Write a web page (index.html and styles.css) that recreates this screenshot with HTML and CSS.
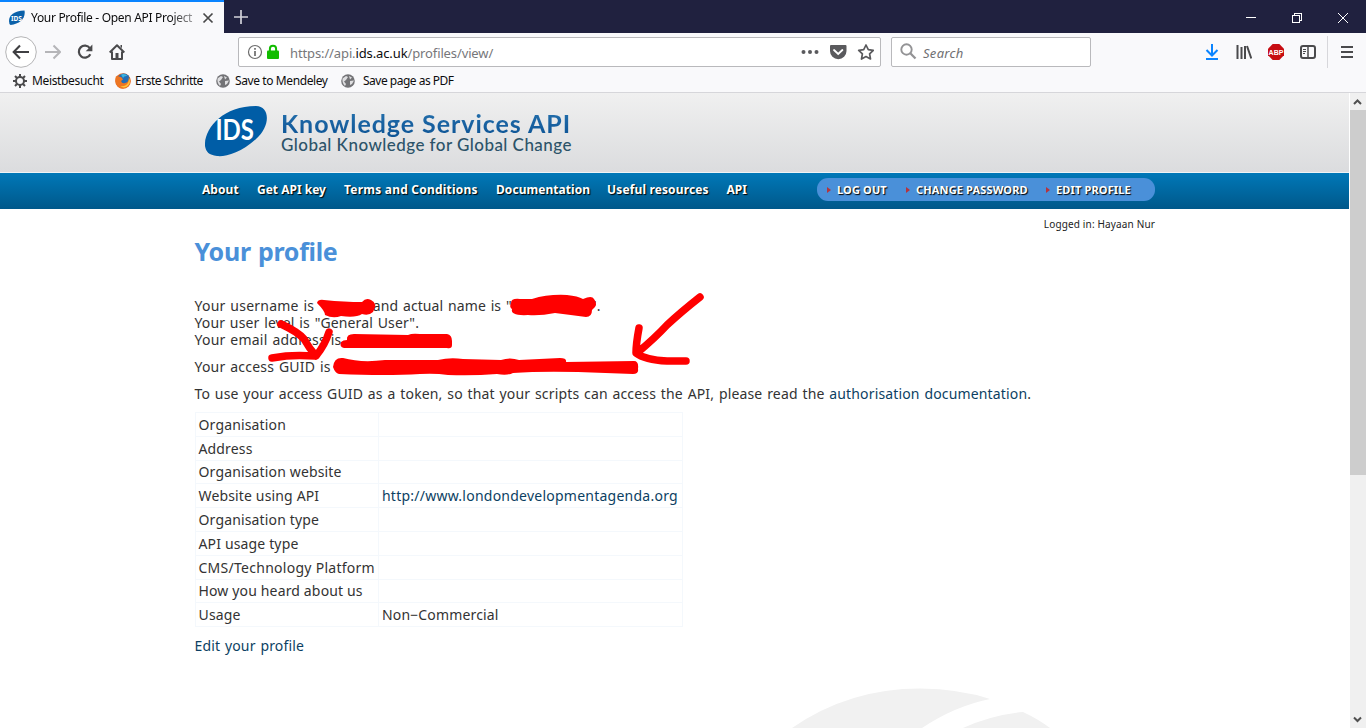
FILE: index.html
```html
<!DOCTYPE html>
<html lang="en">
<head>
<meta charset="utf-8">
<title>Your Profile - Open API Project</title>
<link rel="stylesheet" href="styles.css">
</head>
<body>
<div class="window">
  <div class="tabbar">
    <div class="tab">
      <svg class="favicon" width="16" height="16" viewBox="0 0 16 16"><path d="M0 11C0 5 5 1 15.500 .5C17 8 11 14 1.500 15Q0 14 0 11Z" fill="#0b61a9"/><text x="2" y="11" class="fav-text">IDS</text></svg>
      <span class="tab-title">Your Profile - Open API Project</span>
      <svg class="tab-close" width="12" height="12" viewBox="0 0 12 12"><path d="M1.500 1.500L10.500 10.500M10.500 1.500L1.500 10.500" stroke="#484848" stroke-width="1.700"/></svg>
    </div>
    <svg class="tab-new" width="14" height="14" viewBox="0 0 14 14"><path d="M7 0V14M0 7H14" stroke="#d2d2da" stroke-width="1.700"/></svg>
    <svg class="win-controls" width="108" height="16" viewBox="0 0 108 16" fill="none" stroke="#fff" shape-rendering="crispEdges"><path d="M3 8.500H13M49.500 6.500H56.500V13.500H49.500ZM51.500 6.500V4.500H58.500V11.500H56.500"/><path d="M95 4L105 14M105 4L95 14" shape-rendering="auto"/></svg>
  </div>

  <div class="toolbar">
    <div class="nav-buttons">
      <svg width="32" height="32" viewBox="0 0 32 32" fill="none"><circle cx="16" cy="16" r="15.300" fill="#fff" stroke="#b4b4b6"/><path d="M24 16H9M15 9.500L8.700 16L15 22.500" stroke="#3f3f42" stroke-width="2.100"/></svg>
      <svg width="16" height="16" viewBox="0 0 16 16" fill="none"><path d="M0 8H14.500M8.500 1.500L15 8L8.500 14.500" stroke="#b5b5b8" stroke-width="2"/></svg>
      <svg width="16" height="16" viewBox="0 0 16 16" fill="none"><path d="M13.300 10.200A6 6 0 1 1 12.800 4.200" stroke="#4a4a4c" stroke-width="2.200"/><path d="M15.400 .5V7.200H8.700Z" fill="#4a4a4c"/></svg>
      <svg width="16" height="16" viewBox="0 0 16 16" fill="none"><path d="M.7 8.500L8 1.300L15.300 8.500M3 7.500V15H13V7.500" stroke="#4a4a4c" stroke-width="2" stroke-linejoin="round"/><path d="M6.500 9H9.500V15H6.500Z" fill="#4a4a4c"/><path d="M11.500 1H13V4L11.500 3Z" fill="#4a4a4c"/></svg>
    </div>
    <div class="urlbar">
      <svg width="16" height="16" viewBox="0 0 16 16" fill="none"><circle cx="8" cy="8" r="6.500" stroke="#6c6c6c" stroke-width="1.200"/><path d="M8 7V12M8 4V5.800" stroke="#6c6c6c" stroke-width="1.700"/></svg>
      <svg width="14" height="16" viewBox="0 0 14 16"><path d="M3.900 7V4.800A3.100 3.100 0 0 1 10.100 4.800V7" fill="none" stroke="#12bc00" stroke-width="2"/><rect x="1" y="6.500" width="12" height="8.500" rx="1" fill="#12bc00"/></svg>
      <span class="url">https://api.<b>ids.ac.uk</b>/profiles/view/</span>
      <svg class="url-icons" width="74" height="18" viewBox="0 0 74 18"><g fill="#5a5a5d"><circle cx="3.500" cy="9" r="2"/><circle cx="10" cy="9" r="2"/><circle cx="16.500" cy="9" r="2"/><path d="M30.500 2H45.500Q46.500 2 46.500 3V8A8 8 0 0 1 30 8V3Q30 2 31 2Z"/></g><path d="M34 7L38.200 11L42.400 7" fill="none" stroke="#fff" stroke-width="1.800" stroke-linecap="round"/><path d="M66 2L68.300 6.700L73.300 7.300L69.600 10.900L70.500 16L66 13.600L61.500 16L62.400 10.900L58.700 7.300L63.700 6.700Z" fill="none" stroke="#5a5a5d" stroke-width="1.700" stroke-linejoin="round"/></svg>
    </div>
    <div class="searchbar">
      <svg width="17" height="17" viewBox="0 0 17 17" fill="none" stroke="#939395"><circle cx="6.500" cy="6.500" r="5.200" stroke-width="1.900"/><path d="M10.300 10.300L15.500 15.500" stroke-width="2.300"/></svg>
      <span>Search</span>
    </div>
    <div class="tools">
      <svg width="14" height="16" viewBox="0 0 14 16" fill="none" stroke="#0a84ff" stroke-width="2"><path d="M7 0V11M1.500 6L7 11.500L12.500 6M1 15H13"/></svg>
      <svg width="16" height="16" viewBox="0 0 16 16" stroke="#4a4a4c" fill="none" stroke-width="2"><path d="M1.500 1V15M5.500 3V15M9 2V15M11 2L15.300 14.500"/></svg>
      <svg width="16" height="16" viewBox="0 0 16 16"><path d="M4.700 0H11.300L16 4.700V11.300L11.300 16H4.700L0 11.300V4.700Z" fill="#c70d12"/><text x="8" y="10.900" class="abp">ABP</text></svg>
      <svg width="16" height="16" viewBox="0 0 16 16" fill="none" stroke="#4a4a4c"><rect x="1" y="2" width="14" height="12" rx="2" stroke-width="2"/><path d="M8 2V14" stroke-width="1.500"/><path d="M3 5.500H6M3 7.500H6M3 9.500H5"/></svg>
      <span class="divider"></span>
      <svg width="12" height="12" viewBox="0 0 12 12" stroke="#4a4a4c" stroke-width="2"><path d="M0 1H12M0 6H12M0 11H12"/></svg>
    </div>
  </div>

  <div class="bookmarks">
    <div class="bookmark b1"><svg width="14" height="14" viewBox="0 0 14 14" fill="none" stroke="#4b4b4d"><circle cx="7" cy="7" r="4" stroke-width="2"/><path d="M7 0V3M7 11V14M0 7H3M11 7H14M2 2L4 4M10 10L12 12M12 2L10 4M2 12L4 10" stroke-width="2"/></svg><span>Meistbesucht</span></div>
    <div class="bookmark b2"><svg width="16" height="16" viewBox="0 0 16 16"><circle cx="8" cy="8" r="7.800" fill="#e6691f"/><circle cx="8.800" cy="6.500" r="6" fill="#226db6"/><path d="M6 1.500Q10 0 12.500 3Q9 2.500 8 5Z" fill="#39b4e0"/><path d="M1 3Q3 4 4.500 3.500Q7 4 8 6.500L6 8Q7 11 10 10Q14 9.500 14 4Q17 9 13.500 13Q9 17 4 14.500Q-1 10 1 3Z" fill="#ed7623"/><path d="M13.500 4.500Q17 10 12 13.500Q8 15.500 5 13Q10 14 13 10Q14.500 7 13.500 4.500Z" fill="#ffc63a"/></svg><span>Erste Schritte</span></div>
    <div class="bookmark b3"><svg width="14" height="14" viewBox="0 0 14 14"><circle cx="7" cy="7" r="6.800" fill="#737376"/><path d="M1.500 4.500L5 2L7 3L5 6L3 7.500L5 10L4 12Q1 9 1.500 4.500ZM8 2L11 3.500L9 5.500ZM9 7L13 6.500L11 10L9 11Z" fill="#dedee0"/></svg><span>Save to Mendeley</span></div>
    <div class="bookmark b4"><svg width="14" height="14" viewBox="0 0 14 14"><circle cx="7" cy="7" r="6.800" fill="#737376"/><path d="M1.500 4.500L5 2L7 3L5 6L3 7.500L5 10L4 12Q1 9 1.500 4.500ZM8 2L11 3.500L9 5.500ZM9 7L13 6.500L11 10L9 11Z" fill="#dedee0"/></svg><span>Save page as PDF</span></div>
  </div>

  <div class="viewport">
    <div class="page">
      <header class="masthead">
        <svg class="logo" width="62" height="52" viewBox="0 0 62 52"><path d="M0 40C-1 23 17 0 51 0C65 0 66 20 51 33C36 47 20 51 12 50C4 49 1 46 0 40Z" fill="#005da6"/><text x="10.500" y="33.500" class="logo-text" textLength="38.500" lengthAdjust="spacingAndGlyphs">IDS</text></svg>
        <div class="brand"><div class="brand-name">Knowledge Services API</div><div class="brand-tag">Global Knowledge for Global Change</div></div>
      </header>
      <nav class="mainnav">
        <div class="links"><a class="n1">About</a><a class="n2">Get API key</a><a class="n3">Terms and Conditions</a><a class="n4">Documentation</a><a class="n5">Useful resources</a><a class="n6">API</a></div>
        <div class="account"><a class="a1">LOG OUT</a><a class="a2">CHANGE PASSWORD</a><a class="a3">EDIT PROFILE</a></div>
      </nav>
      <main class="content">
        <div class="logged">Logged in: Hayaan Nur</div>
        <h1>Your profile</h1>
        <p class="info">Your username is<i class="gap g1"></i><span class="name">and actual name is "</span><i class="gap g2"></i>".<br><span class="level">Your user level is "General User".</span><br>Your email address is</p>
        <p class="guid">Your access GUID is</p>
        <p class="token">To use your access GUID as a token, so that your scripts can access the API, please read the <a>authorisation documentation</a>.</p>
        <table>
          <tr><td>Organisation</td><td></td></tr>
          <tr><td>Address</td><td></td></tr>
          <tr><td>Organisation website</td><td></td></tr>
          <tr><td>Website using API</td><td><a class="site">http://www.londondevelopmentagenda.org</a></td></tr>
          <tr><td>Organisation type</td><td></td></tr>
          <tr><td>API usage type</td><td></td></tr>
          <tr><td class="wide">CMS/Technology Platform</td><td></td></tr>
          <tr><td>How you heard about us</td><td></td></tr>
          <tr><td>Usage</td><td>Non−Commercial</td></tr>
        </table>
        <a class="edit">Edit your profile</a>
      </main>
      <svg class="watermark" width="300" height="40" viewBox="780 688 300 40"><path d="M792 728Q849 688.500 920 688.500Q960 689 990 699Q955 706 922 728ZM963 728Q992 715 1023 712Q1038 719 1050 728Z" fill="#f1f1f1"/></svg>
    </div>
    <div class="scrollbar">
      <svg width="16" height="17" viewBox="0 0 16 17"><path d="M4 11L7.500 7.500L11 11" fill="none" stroke="#505050" stroke-width="2"/></svg>
      <div class="thumb"></div>
      <svg width="16" height="17" viewBox="0 0 16 17"><path d="M4 6.500L7.500 10L11 6.500" fill="none" stroke="#505050" stroke-width="2"/></svg>
    </div>
  </div>
  <!-- Hand-drawn redactions and arrows over the page -->
  <svg class="marks" width="1366" height="728" viewBox="0 0 1366 728">
    <g fill="#f00"><path d="M317 303Q318 299 324 300Q345 302 362 302Q366 297 371 300Q378 303 373 312Q369 316 362 314Q356 318 341 316Q333 319 325 315Q325 311 317 303Z"/>
    <path d="M511 303Q511 298 520 299L532 299Q548 294 567 295Q578 296 583 299Q592 295 594 299Q599 305 592 310Q592 317 586 317Q571 315 555 313Q540 316 528 315Q510 316 512 309Q509 307 511 303Z"/>
    <path d="M341 342Q343 340 347 340Q346 334 354 334L408 335Q412 333 420 334L447 334Q452 335 452 341L452 345Q452 349 447 348L392 348L344 348Q339 347 341 342Z"/>
    <path d="M333 367Q334 357 343 358Q361 363 385 360L438 360Q450 357 463 359L501 360Q510 357 519 360L560 358Q567 358 566 362L634 361Q639 361 638 369Q639 374 633 374L578 372Q540 371 513 373Q507 376 497 374Q473 376 448 375Q435 373 420 374Q386 376 339 374Q335 373 333 367Z"/></g>
    <g fill="none" stroke="#f00" stroke-width="7.500" stroke-linecap="round" stroke-linejoin="round"><path d="M281 324Q298 332 304 339Q309 348 316 356M329 332Q325 345 316 356Q298 355 286 356L272 358"/><path d="M700 297Q681 312 667 325Q655 338 637 353M639 328Q636 344 636 353Q645 360 667 361L686 361"/></g>
  </svg>
</div>
</body>
</html>
```
FILE: styles.css
```css
* { box-sizing: border-box; }
body { margin: 0; }
svg { display: block; flex: none; }
.window { position: relative; width: 1366px; height: 728px; overflow: hidden; display: flex; flex-direction: column; font-family: "Noto Sans", sans-serif; background: #f9f9fb; }
.window span, .window a { white-space: nowrap; }

.tabbar { height: 33px; flex: none; background: #20213f; display: flex; align-items: center; }
.tab { width: 224px; height: 33px; background: #f9f9fb; border-top: 2px solid #0a84ff; display: flex; align-items: center; padding-left: 9px; }
.fav-text { font: bold 6.500px "Noto Sans", sans-serif; fill: #fff; }
.tab-title { font-size: 12px; letter-spacing: -0.31px; color: #0c0c0d; width: 163px; margin: 0 8px 0 6px; -webkit-mask-image: linear-gradient(90deg, #000 138px, #0006 162px); mask-image: linear-gradient(90deg, #000 138px, #0006 162px); }
.tab-new { margin-left: 10px; }
.win-controls { margin-left: auto; margin-right: 15px; }

.toolbar { height: 37px; flex: none; display: flex; align-items: center; }
.nav-buttons { width: 238px; padding-left: 5px; display: flex; align-items: center; gap: 16px; }
.nav-buttons svg:nth-child(2) { margin-left: -8px; }
.urlbar { width: 643px; height: 30px; border: 1px solid #b9b9bc; border-radius: 2px; background: #fff; display: flex; align-items: center; padding: 0 6px 0 8px; }
.urlbar svg:nth-child(2) { margin-left: 3px; }
.url { color: #77777a; font-size: 13px; margin-left: 10px; letter-spacing: -0.12px; padding-top: 2px; }
.url b { font-weight: normal; color: #0c0c0d; }
.url-icons { margin-left: auto; }
.searchbar { width: 200px; height: 30px; margin-left: 10px; border: 1px solid #b9b9bc; border-radius: 2px; background: #fff; display: flex; align-items: center; gap: 6px; padding-left: 8px; font-size: 13px; font-style: italic; color: #707073; letter-spacing: 0.3px; }
.searchbar span { padding-top: 2px; }
.tools { display: flex; align-items: center; margin-left: auto; padding-right: 13px; gap: 16px; }
.tools svg:first-child { margin-right: 1px; }
.divider { width: 1px; height: 32px; background: #d7d7db; margin: 0 -3px 0 -5px; }
.abp { font: bold 7px "Liberation Sans", sans-serif; fill: #fff; text-anchor: middle; }

.bookmarks { height: 23px; flex: none; border-bottom: 1px solid #d6d6da; display: flex; align-items: center; padding: 0 0 1px 13px; font-size: 12px; color: #0c0c0d; letter-spacing: -0.4px; }
.bookmark { display: flex; align-items: center; height: 20px; gap: 5px; }
.b1 { width: 101px; letter-spacing: -0.35px; }
.b2 { width: 102px; padding-left: 1px; gap: 4px; letter-spacing: -0.5px; }
.b3 { width: 125px; }
.b4 { gap: 8px; letter-spacing: -0.5px; }

.viewport { flex: 1; display: flex; min-height: 0; }
.page { width: 1349px; position: relative; background: #fff; overflow: hidden; color: #333; }
.scrollbar { width: 17px; background: #f0f0f0; border-left: 1px solid #fff; display: flex; flex-direction: column; }
.thumb { height: 365px; background: #cdcdcd; margin-bottom: auto; }

.masthead { height: 80px; background: linear-gradient(#f0f0f0, #dbdcde); border-bottom: 1px solid #eef3f6; display: flex; padding: 13px 0 0 205px; }
.logo-text { font: bold 29px Lato, sans-serif; fill: #fff; }
.brand { margin-left: 14px; white-space: nowrap; font-family: Lato, sans-serif; }
.brand-name { font-size: 25px; line-height: 29px; font-weight: bold; letter-spacing: 0.95px; margin-top: 3px; background: linear-gradient(#2672ae, #0c5294); -webkit-background-clip: text; background-clip: text; -webkit-text-fill-color: transparent; }
.brand-tag { font-size: 17px; line-height: 15px; margin-top: -1px; font-weight: 500; color: #2c5369; letter-spacing: 0.45px; }

.mainnav { height: 36px; background: linear-gradient(#0078b8, #00588a); display: flex; align-items: center; padding-bottom: 3px; color: #fff; font-weight: bold; font-size: 12px; text-shadow: 1px 1px 1px #000; }
.links { display: flex; width: 615px; margin-left: 202px; letter-spacing: 0.05px; }
.n1 { width: 55px; } .n2 { width: 87px; letter-spacing: 0; } .n3 { width: 152px; letter-spacing: 0.22px; } .n4 { width: 111px; } .n5 { width: 119.500px; letter-spacing: 0.14px; }
.account { width: 338px; height: 23px; border-radius: 11px; background: #4a90d9; display: flex; align-items: center; font-size: 11px; padding-left: 10px; letter-spacing: 0.15px; }
.account a { display: flex; align-items: center; gap: 6px; }
.account a::before { content: ""; border: 3px solid transparent; border-left: 4px solid #b5343d; border-right: 0; }
.a1 { width: 79px; } .a2 { width: 140px; }

.content { width: 960.500px; margin-left: 194.500px; font-size: 14px; line-height: 17px; letter-spacing: 0.15px; word-spacing: 1px; }
.logged { text-align: right; font-size: 10px; line-height: 14px; padding-top: 8px; color: #222; word-spacing: 0; }
h1 { margin: 3px 0 0; font-size: 25px; line-height: 34px; color: #4a90d9; letter-spacing: -0.3px; }
p { margin: 10px 0 0; white-space: nowrap; }
p.info { margin-top: 29px; letter-spacing: 0.22px; }
p.guid { letter-spacing: 0.2px; }
.name { letter-spacing: 0.1px; }
.level { letter-spacing: 0.12px; }
.gap { display: inline-block; }
.g1 { width: 58.500px; } .g2 { width: 79px; }
a { color: inherit; }
.content a { color: #0c3f63; }
.content .site { letter-spacing: 0.24px; }
table { border-collapse: collapse; margin-top: 10px; width: 488px; word-spacing: 0; }
td { border: 1px solid #f4f8fc; height: 23.800px; padding: 0 3px; white-space: nowrap; }
td:first-child { width: 183px; }
td + td { padding: 0 3px 0 3px; }
td.wide { letter-spacing: 0.27px; }
.edit { display: block; margin-top: 10px; }
.watermark { position: absolute; left: 780px; bottom: 0; }
.marks { position: absolute; left: 0; top: 0; }
```
